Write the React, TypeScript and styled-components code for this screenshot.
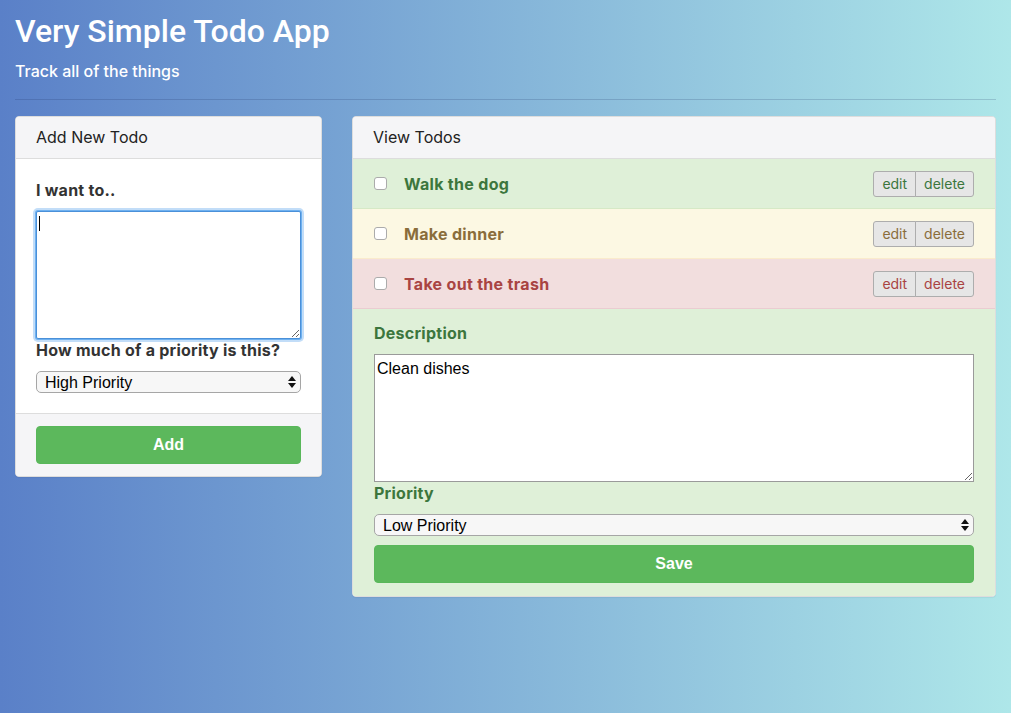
import React from "react";
import styled, { createGlobalStyle, css } from "styled-components";

const GlobalStyle = createGlobalStyle`
  html, body { margin: 0; padding: 0; height: 100%; }
  body {
    font-family: Inter, "Liberation Sans", Arial, sans-serif;
    color: #333;
  }
  #root { min-height: 100%; }
  * { box-sizing: border-box; }
`;

type Tone = "success" | "warning" | "danger";

const tones: Record<Tone, { bg: string; fg: string; border: string }> = {
  success: { bg: "#dff0d8", fg: "#3c763d", border: "#d6e9c6" },
  warning: { bg: "#fcf8e3", fg: "#8a6d3b", border: "#faebcc" },
  danger: { bg: "#f2dede", fg: "#a94442", border: "#ebccd1" },
};

const Page = styled.div`
  min-height: 713px;
  padding: 0 15px;
  background: linear-gradient(to right, #5a80c8 0%, #aee7e9 100%);
`;

const Header = styled.header`
  display: flex;
  flex-direction: column;
`;

const Title = styled.h1`
  margin: 14px 0 0;
  font-family: Roboto, "Liberation Sans", Arial, sans-serif;
  font-weight: 500;
  font-size: 32px;
  line-height: 35px;
  color: #fff;
`;

const Subtitle = styled.p`
  margin: 11px 0 0;
  font-weight: 500;
  font-size: 16px;
  line-height: 22px;
  color: #fff;
`;

const Divider = styled.hr`
  margin: 17px 0 16px;
  border: 0;
  border-top: 1px solid rgba(20, 40, 90, 0.18);
`;

const Row = styled.div`
  display: grid;
  grid-template-columns: 1fr 2fr;
  margin: 0 -15px;
  align-items: start;
`;

const Col = styled.div`
  padding: 0 15px;
`;

const Panel = styled.section`
  background: #fff;
  border: 1px solid #ddd;
  border-radius: 4px;
  overflow: hidden;
  box-shadow: 0 1px 1px rgba(0, 0, 0, 0.05);
`;

const PanelHeading = styled.div`
  padding: 10px 20px;
  font-size: 16px;
  line-height: 21px;
  background: #f5f5f7;
  border-bottom: 1px solid #ddd;
  color: #222;
`;

const PanelBody = styled.div`
  display: flex;
  flex-direction: column;
  padding: 20px 20px 20px;
`;

const PanelFooter = styled.div`
  padding: 12px 20px;
  background: #f5f5f7;
  border-top: 1px solid #ddd;
`;

const Label = styled.label<{ $tone?: Tone }>`
  display: block;
  margin-bottom: 10px;
  font-weight: 700;
  font-size: 16px;
  line-height: 22px;
  letter-spacing: 0.25px;
  color: ${(p) => (p.$tone ? tones[p.$tone].fg : "#333")};
`;

const TextAreaWrap = styled.div`
  position: relative;
`;

const TextArea = styled.textarea<{ $focused?: boolean }>`
  display: block;
  width: 100%;
  height: 128px;
  margin: 0;
  padding: 5px 2px 3px;
  font-family: "Liberation Sans", Arial, sans-serif;
  font-size: 16px;
  line-height: 18px;
  color: #000;
  background: #fff;
  border: 1px solid #9a9a9a;
  border-radius: 0;
  resize: vertical;
  outline: none;
  ${(p) =>
    p.$focused &&
    css`
      border: 1px solid #4a90d9;
      box-shadow: 0 0 0 1px #6fb1f0, 0 0 0 3px rgba(120, 180, 240, 0.45);
      border-radius: 2px;
    `}
`;

const Caret = styled.span`
  position: absolute;
  left: 3px;
  top: 5px;
  width: 1px;
  height: 15px;
  background: #000;
`;

const SelectWrap = styled.div`
  position: relative;
`;

const Select = styled.select`
  display: block;
  width: 100%;
  height: 22px;
  margin: 0;
  padding: 0 20px 0 8px;
  font-family: "Liberation Sans", Arial, sans-serif;
  font-size: 16px;
  color: #000;
  background: #f7f7f7;
  border: 1px solid #a6a6a6;
  border-radius: 5px;
  appearance: none;
  -webkit-appearance: none;
  outline: none;
`;

const SelectArrows = styled.svg`
  position: absolute;
  right: 5px;
  top: 50%;
  margin-top: -8px;
  width: 8px;
  height: 16px;
  pointer-events: none;
`;

const PrimaryButton = styled.button`
  display: block;
  width: 100%;
  height: 38px;
  margin: 0;
  padding: 0;
  font-family: "Liberation Sans", Arial, sans-serif;
  font-weight: 700;
  font-size: 16px;
  color: #fff;
  background: #5cb85c;
  border: 1px solid #59b75a;
  border-radius: 4px;
  cursor: pointer;
`;

const TodoList = styled.div`
  display: flex;
  flex-direction: column;
`;

const TodoItem = styled.div<{ $tone: Tone }>`
  display: flex;
  align-items: center;
  height: 50px;
  padding: 0 21px 0 21px;
  background: ${(p) => tones[p.$tone].bg};
  border-bottom: 1px solid ${(p) => tones[p.$tone].border};
  color: ${(p) => tones[p.$tone].fg};
`;

const Check = styled.input.attrs({ type: "checkbox" })`
  appearance: none;
  -webkit-appearance: none;
  width: 13px;
  height: 13px;
  margin: 0 17px 0 0;
  background: #fff;
  border: 1px solid #ababab;
  border-radius: 3px;
  flex: none;
`;

const TodoText = styled.span`
  flex: 1;
  font-weight: 700;
  font-size: 16px;
  letter-spacing: 0.3px;
`;

const ButtonGroup = styled.div`
  display: flex;
`;

const GroupButton = styled.button<{ $tone: Tone }>`
  height: 26px;
  margin: 0;
  padding: 0 8px;
  font-family: Inter, "Liberation Sans", Arial, sans-serif;
  font-size: 14px;
  color: ${(p) => tones[p.$tone].fg};
  background: #e6e6e6;
  border: 1px solid #adadad;
  cursor: pointer;
  &:first-child {
    border-radius: 3px 0 0 3px;
  }
  & + & {
    margin-left: -1px;
    border-radius: 0 3px 3px 0;
  }
`;

const EditForm = styled.div`
  display: flex;
  flex-direction: column;
  padding: 13px 21px 13px;
  background: #dff0d8;
`;

const FormSpacer = styled.div`
  height: 9px;
`;

function Arrows() {
  return (
    <SelectArrows viewBox="0 0 8 16">
      <path d="M4 2 L8 7 L0 7 Z" fill="#111" />
      <path d="M0 9 L8 9 L4 14 Z" fill="#111" />
    </SelectArrows>
  );
}

const todos: { text: string; tone: Tone }[] = [
  { text: "Walk the dog", tone: "success" },
  { text: "Make dinner", tone: "warning" },
  { text: "Take out the trash", tone: "danger" },
];

export default function App() {
  return (
    <>
      <GlobalStyle />
      <Page>
        <Header>
          <Title>Very Simple Todo App</Title>
          <Subtitle>Track all of the things</Subtitle>
        </Header>
        <Divider />
        <Row>
          <Col>
            <Panel>
              <PanelHeading>Add New Todo</PanelHeading>
              <PanelBody>
                <Label>I want to..</Label>
                <TextAreaWrap>
                  <TextArea $focused defaultValue="" />
                  <Caret />
                </TextAreaWrap>
                <Label>How much of a priority is this?</Label>
                <SelectWrap>
                  <Select defaultValue="high">
                    <option value="high">High Priority</option>
                    <option value="medium">Medium Priority</option>
                    <option value="low">Low Priority</option>
                  </Select>
                  <Arrows />
                </SelectWrap>
              </PanelBody>
              <PanelFooter>
                <PrimaryButton>Add</PrimaryButton>
              </PanelFooter>
            </Panel>
          </Col>
          <Col>
            <Panel>
              <PanelHeading>View Todos</PanelHeading>
              <TodoList>
                {todos.map((t) => (
                  <TodoItem key={t.text} $tone={t.tone}>
                    <Check />
                    <TodoText>{t.text}</TodoText>
                    <ButtonGroup>
                      <GroupButton $tone={t.tone}>edit</GroupButton>
                      <GroupButton $tone={t.tone}>delete</GroupButton>
                    </ButtonGroup>
                  </TodoItem>
                ))}
              </TodoList>
              <EditForm>
                <Label $tone="success">Description</Label>
                <TextArea defaultValue="Clean dishes" />
                <Label $tone="success">Priority</Label>
                <SelectWrap>
                  <Select defaultValue="low">
                    <option value="high">High Priority</option>
                    <option value="medium">Medium Priority</option>
                    <option value="low">Low Priority</option>
                  </Select>
                  <Arrows />
                </SelectWrap>
                <FormSpacer />
                <PrimaryButton>Save</PrimaryButton>
              </EditForm>
            </Panel>
          </Col>
        </Row>
      </Page>
    </>
  );
}
